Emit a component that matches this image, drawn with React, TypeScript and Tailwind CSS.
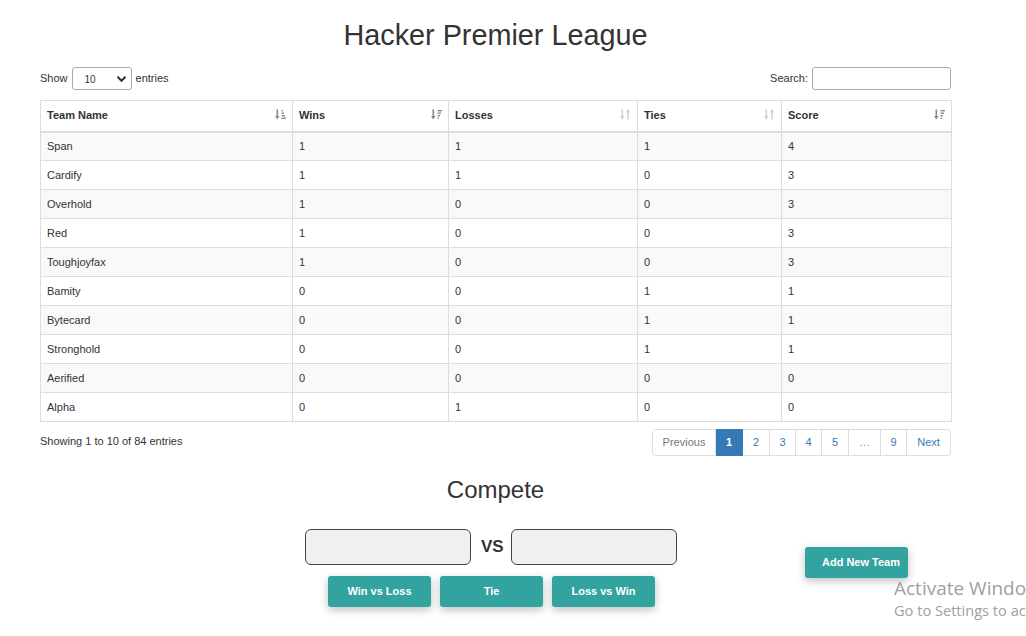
import React from "react";

const rows: [string, number, number, number, number][] = [
  ["Span", 1, 1, 1, 4],
  ["Cardify", 1, 1, 0, 3],
  ["Overhold", 1, 0, 0, 3],
  ["Red", 1, 0, 0, 3],
  ["Toughjoyfax", 1, 0, 0, 3],
  ["Bamity", 0, 0, 1, 1],
  ["Bytecard", 0, 0, 1, 1],
  ["Stronghold", 0, 0, 1, 1],
  ["Aerified", 0, 0, 0, 0],
  ["Alpha", 0, 1, 0, 0],
];

function SortIcon({ kind }: { kind: "asc" | "desc" | "both" }) {
  const color = kind === "both" ? "#d0d0d0" : "#8a8a8a";
  return (
    <svg width="11" height="11" viewBox="0 0 11 11" className="shrink-0">
      {kind === "both" ? (
        <g fill={color}>
          <rect x="1.5" y="0.5" width="1.6" height="7" />
          <polygon points="0,7 4.6,7 2.3,10.5" />
          <rect x="7.2" y="3.5" width="1.6" height="7" />
          <polygon points="5.7,3.5 10.3,3.5 8,0" />
        </g>
      ) : kind === "asc" ? (
        <g fill={color}>
          <rect x="1.5" y="0.5" width="1.6" height="7" />
          <polygon points="0,7 4.6,7 2.3,10.5" />
          <rect x="6.5" y="1" width="1.5" height="1.4" />
          <rect x="6.5" y="3.5" width="2.5" height="1.4" />
          <rect x="6.5" y="6" width="3.5" height="1.4" />
          <rect x="6.5" y="8.5" width="4.5" height="1.4" />
        </g>
      ) : (
        <g fill={color}>
          <rect x="1.5" y="0.5" width="1.6" height="7" />
          <polygon points="0,7 4.6,7 2.3,10.5" />
          <rect x="6.5" y="1" width="4.5" height="1.4" />
          <rect x="6.5" y="3.5" width="3.5" height="1.4" />
          <rect x="6.5" y="6" width="2.5" height="1.4" />
          <rect x="6.5" y="8.5" width="1.5" height="1.4" />
        </g>
      )}
    </svg>
  );
}

const headers: { label: string; w: string; kind: "asc" | "desc" | "both" }[] = [
  { label: "Team Name", w: "w-[252px]", kind: "asc" },
  { label: "Wins", w: "w-[156px]", kind: "desc" },
  { label: "Losses", w: "w-[189px]", kind: "both" },
  { label: "Ties", w: "w-[144px]", kind: "both" },
  { label: "Score", w: "w-[170px]", kind: "desc" },
];

export default function App() {
  return (
    <div
      className="relative w-[1026px] h-[636px] overflow-hidden bg-white text-[#333]"
      style={{ fontFamily: '"Liberation Sans", Arial, sans-serif' }}
    >
      <div className="ml-[40px] w-[911px]">
        <h1 className="mt-[17px] text-center text-[28.8px] leading-[36px] text-[#333]">
          Hacker Premier League
        </h1>

        <div className="mt-[14px] flex h-[23px] items-center justify-between text-[11px]">
          <div className="flex items-center">
            <span>Show</span>
            <div className="mx-[4px] flex h-[23px] w-[60px] items-center justify-between rounded-[3px] border border-[#aaa] bg-white pl-[12px] pr-[4px] text-[10px]">
              <span className="mt-[2px]">10</span>
              <svg width="11" height="8" viewBox="0 0 11 8">
                <path d="M1.5 1.8 L5.5 5.8 L9.5 1.8" stroke="#333" strokeWidth="2" fill="none" />
              </svg>
            </div>
            <span>entries</span>
          </div>
          <div className="flex items-center">
            <span className="mr-[4px]">Search:</span>
            <div className="h-[23px] w-[139px] rounded-[3px] border border-[#aaa] bg-white" />
          </div>
        </div>

        <table className="mt-[10px] w-[911px] table-fixed border-collapse text-[11px]">
          <thead>
            <tr>
              {headers.map((h) => (
                <th
                  key={h.label}
                  className={`${h.w} h-[31px] border border-b-2 border-[#ddd] px-[6px] text-left align-middle font-bold`}
                >
                  <div className="flex items-center justify-between pb-[1px]">
                    <span>{h.label}</span>
                    <span className="-mt-[2px]">
                      <SortIcon kind={h.kind} />
                    </span>
                  </div>
                </th>
              ))}
            </tr>
          </thead>
          <tbody>
            {rows.map((r, i) => (
              <tr key={r[0]} className={i % 2 === 0 ? "bg-[#f9f9f9]" : "bg-white"}>
                {r.map((c, j) => (
                  <td key={j} className="h-[29px] border border-[#ddd] px-[6px] align-middle">
                    {c}
                  </td>
                ))}
              </tr>
            ))}
          </tbody>
        </table>

        <div className="mt-[7px] flex items-center justify-between text-[11px]">
          <span className="mt-[-2px]">Showing 1 to 10 of 84 entries</span>
          <div className="flex h-[27px] items-stretch text-[11px]">
            <span className="flex w-[64px] items-center justify-center rounded-l-[4px] border border-[#ddd] text-[#777]">
              Previous
            </span>
            <span className="flex w-[27px] items-center justify-center border border-l-0 border-[#337ab7] bg-[#337ab7] font-bold text-white">
              1
            </span>
            <span className="flex w-[27px] items-center justify-center border border-l-0 border-[#ddd] text-[#337ab7]">2</span>
            <span className="flex w-[26px] items-center justify-center border border-l-0 border-[#ddd] text-[#337ab7]">3</span>
            <span className="flex w-[26px] items-center justify-center border border-l-0 border-[#ddd] text-[#337ab7]">4</span>
            <span className="flex w-[27px] items-center justify-center border border-l-0 border-[#ddd] text-[#337ab7]">5</span>
            <span className="flex w-[32px] items-center justify-center border border-l-0 border-[#ddd] text-[#999]">…</span>
            <span className="flex w-[26px] items-center justify-center border border-l-0 border-[#ddd] text-[#337ab7]">9</span>
            <span className="flex w-[44px] items-center justify-center rounded-r-[4px] border border-l-0 border-[#ddd] text-[#337ab7]">
              Next
            </span>
          </div>
        </div>

        <h2 className="mt-[19px] text-center text-[24px] leading-[30px] text-[#333]">Compete</h2>

        <div className="mt-[24px] flex items-center justify-center gap-[10px] pr-[9px]">
          <div className="h-[36px] w-[166px] rounded-[6px] border border-[#444] bg-[#f0f0f0]" />
          <span className="w-[20px] text-center text-[17px] font-bold text-[#333]">VS</span>
          <div className="h-[36px] w-[166px] rounded-[6px] border border-[#444] bg-[#f0f0f0]" />
        </div>

        <div className="mt-[11px] flex justify-center gap-[9px] pr-[8px]">
          {["Win vs Loss", "Tie", "Loss vs Win"].map((t) => (
            <button
              key={t}
              className="h-[31px] w-[103px] rounded-[3px] bg-[#33a3a0] text-[11px] font-bold text-white shadow-[0_3px_8px_rgba(0,0,0,0.25)]"
            >
              {t}
            </button>
          ))}
        </div>
      </div>

      <button className="absolute left-[805px] top-[547px] flex h-[31px] w-[103px] items-center justify-end rounded-[3px] bg-[#33a3a0] pr-[8px] text-[11px] font-bold text-white shadow-[0_3px_8px_rgba(0,0,0,0.25)]">
        Add New Team
      </button>

      <div
        className="absolute left-[894px] top-[577px] whitespace-nowrap text-[#a0a0a0]"
        style={{ fontFamily: '"Open Sans", "Noto Sans", sans-serif' }}
      >
        <div className="text-[19px] leading-[22px]">Activate Windows</div>
        <div className="text-[14.6px] leading-[22px]">Go to Settings to activate Windows.</div>
      </div>
    </div>
  );
}
